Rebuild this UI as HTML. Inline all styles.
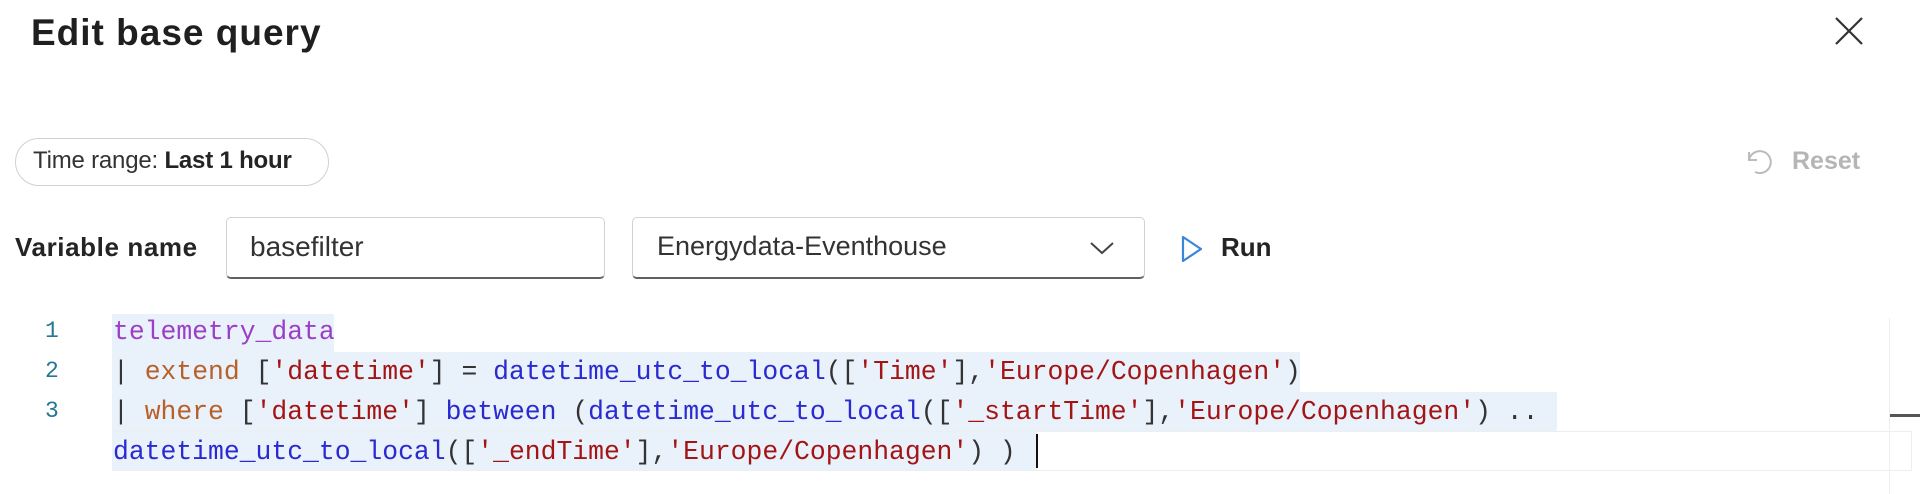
<!DOCTYPE html>
<html><head><meta charset="utf-8"><style>
body{margin:0;width:1920px;height:494px;background:#fff;position:relative;overflow:hidden;font-family:"Liberation Sans",sans-serif;color:#242424}
.a{position:absolute}
.code{font-family:"Liberation Mono",monospace;font-size:26.4px;white-space:pre;line-height:40px}
.hl{background:#e9f1fb}
.p{color:#9b3fc6}.k{color:#b8602a}.s{color:#a31515}.f{color:#2a2ad0}.g{color:#333}
.ln{color:#237893;font-family:"Liberation Mono",monospace;font-size:23px}
</style></head><body>
<div class="a" style="left:31px;top:12px;font-size:37px;font-weight:600;color:#1f1f1f;letter-spacing:1px">Edit base query</div>
<svg class="a" style="left:1834px;top:17px" width="30" height="28" viewBox="0 0 30 28"><path d="M2 1L28 27M28 1L2 27" stroke="#333" stroke-width="2.2" fill="none"/></svg>
<div class="a" style="left:15px;top:138px;width:314px;height:48px;border:1.5px solid #d1d1d1;border-radius:24px;box-sizing:border-box"></div>
<div class="a" style="left:33px;top:147px;font-size:24px;color:#333;letter-spacing:-0.2px">Time range: <span style="font-weight:600;color:#242424">Last 1 hour</span></div>
<svg class="a" style="left:1744px;top:146px" width="30" height="32" viewBox="0 0 30 32"><path d="M5 6v8h8" stroke="#bbb" stroke-width="2" fill="none"/><path d="M5 14A11 11 0 1 1 11 26" stroke="#bbb" stroke-width="2" fill="none"/></svg>
<div class="a" style="left:1792px;top:147px;font-size:25px;font-weight:600;color:#b5b5b5">Reset</div>
<div class="a" style="left:15px;top:232px;font-size:26px;font-weight:600;letter-spacing:0.6px">Variable name</div>
<div class="a" style="left:226px;top:217px;width:379px;height:62px;border:1.5px solid #d1d1d1;border-bottom:2px solid #616161;border-radius:5px;box-sizing:border-box"></div>
<div class="a" style="left:250px;top:231px;font-size:28px;color:#333">basefilter</div>
<div class="a" style="left:632px;top:217px;width:513px;height:62px;border:1.5px solid #d1d1d1;border-bottom:2px solid #616161;border-radius:5px;box-sizing:border-box"></div>
<div class="a" style="left:657px;top:231px;font-size:27px;color:#333">Energydata-Eventhouse</div>
<svg class="a" style="left:1089px;top:240px" width="26" height="16" viewBox="0 0 26 16"><path d="M2 3l11 10 11-10" stroke="#444" stroke-width="2" fill="none"/></svg>
<svg class="a" style="left:1180px;top:234px" width="24" height="30" viewBox="0 0 24 30"><path d="M3 3L21 15L3 27Z" stroke="#3a86d8" stroke-width="2.2" fill="none" stroke-linejoin="round"/></svg>
<div class="a" style="left:1221px;top:232px;font-size:26px;font-weight:600">Run</div>

<div class="a hl" style="left:112px;top:314px;width:222px;height:38px"></div>
<div class="a hl" style="left:112px;top:352px;width:1188px;height:40px"></div>
<div class="a hl" style="left:112px;top:392px;width:1445px;height:40px"></div>
<div class="a" style="left:112px;top:431px;width:1800px;height:40px;border:1.5px solid #eee;box-sizing:border-box"></div>
<div class="a hl" style="left:112px;top:432px;width:925px;height:38px"></div>
<div class="a" style="left:1036px;top:434px;width:2px;height:34px;background:#111"></div>
<div class="a" style="left:1889px;top:318px;width:1px;height:176px;background:#eee"></div>
<div class="a" style="left:1890px;top:414px;width:30px;height:3px;background:#555"></div>

<div class="a ln" style="left:45px;top:318px">1</div>
<div class="a ln" style="left:45px;top:358px">2</div>
<div class="a ln" style="left:45px;top:398px">3</div>
<div class="a code" style="left:113px;top:312px"><span class="p">telemetry_data</span>
<span class="g">|</span> <span class="k">extend</span> <span class="g">[</span><span class="s">'datetime'</span><span class="g">] = </span><span class="f">datetime_utc_to_local</span><span class="g">([</span><span class="s">'Time'</span><span class="g">],</span><span class="s">'Europe/Copenhagen'</span><span class="g">)</span>
<span class="g">|</span> <span class="k">where</span> <span class="g">[</span><span class="s">'datetime'</span><span class="g">] </span><span class="f">between</span><span class="g"> (</span><span class="f">datetime_utc_to_local</span><span class="g">([</span><span class="s">'_startTime'</span><span class="g">],</span><span class="s">'Europe/Copenhagen'</span><span class="g">) ..</span>
<span class="f">datetime_utc_to_local</span><span class="g">([</span><span class="s">'_endTime'</span><span class="g">],</span><span class="s">'Europe/Copenhagen'</span><span class="g">) )</span></div>
</body></html>
